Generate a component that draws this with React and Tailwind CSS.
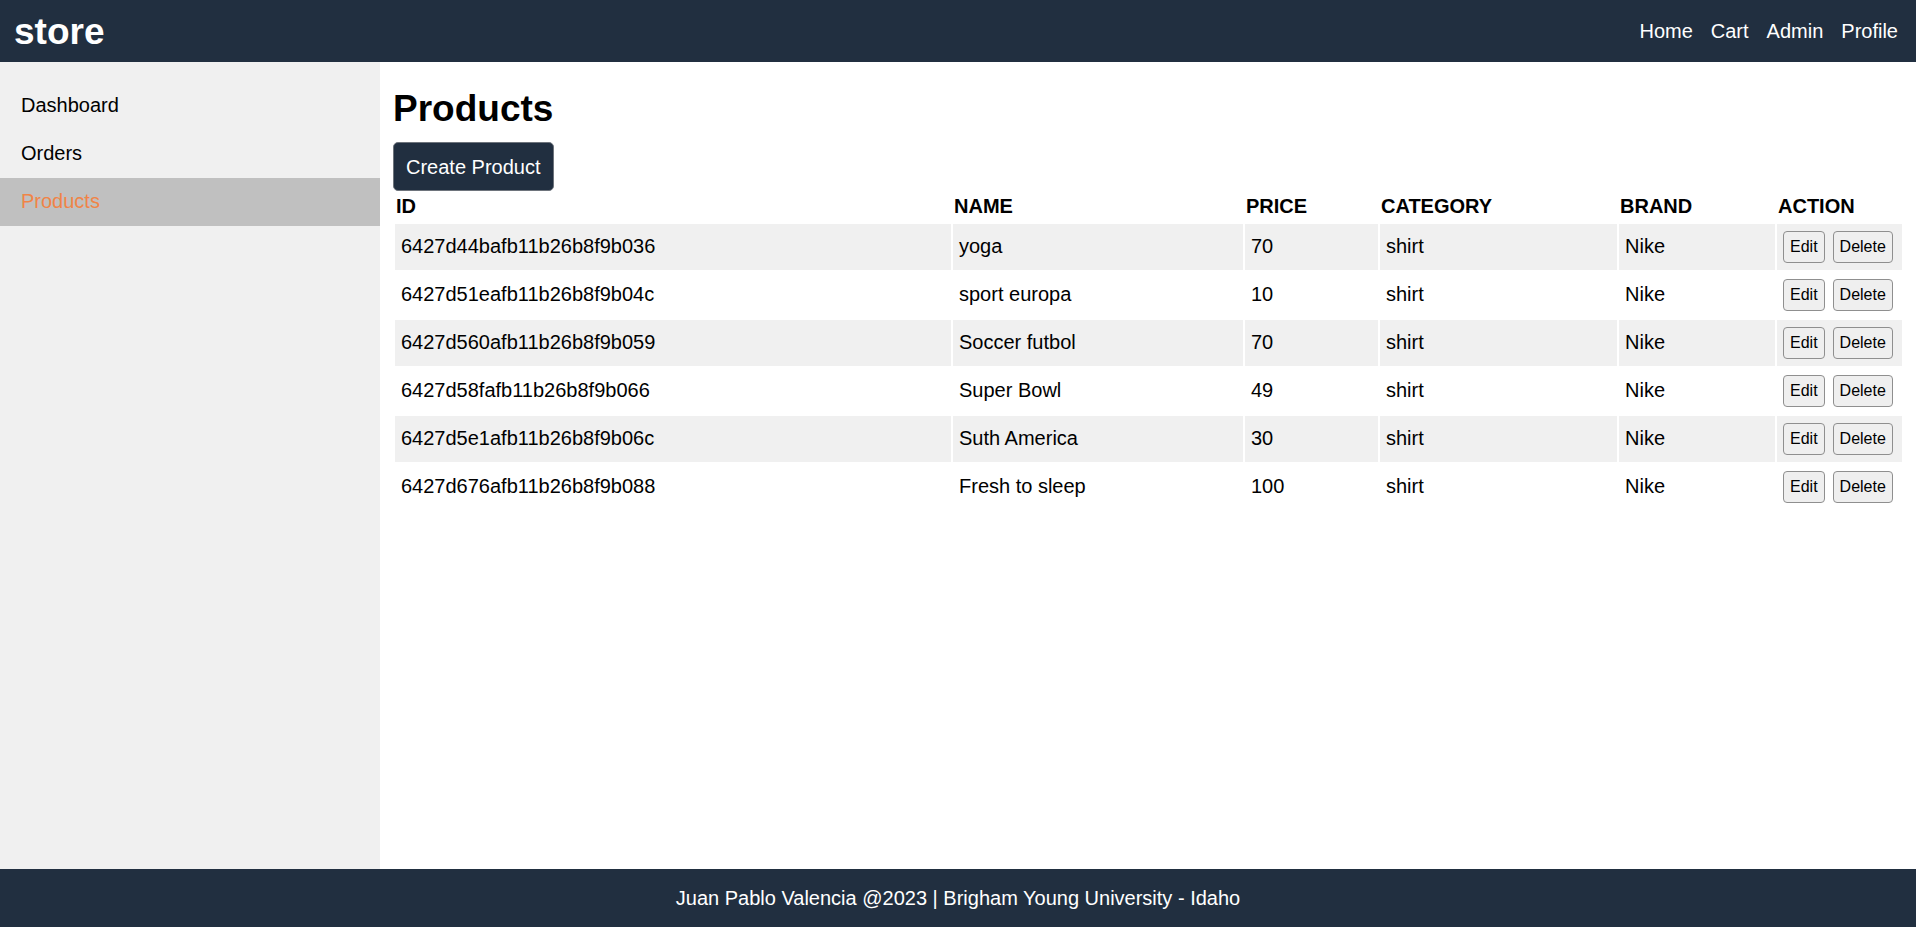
const products = [
  { id: '6427d44bafb11b26b8f9b036', name: 'yoga', price: 70, category: 'shirt', brand: 'Nike' },
  { id: '6427d51eafb11b26b8f9b04c', name: 'sport europa', price: 10, category: 'shirt', brand: 'Nike' },
  { id: '6427d560afb11b26b8f9b059', name: 'Soccer futbol', price: 70, category: 'shirt', brand: 'Nike' },
  { id: '6427d58fafb11b26b8f9b066', name: 'Super Bowl', price: 49, category: 'shirt', brand: 'Nike' },
  { id: '6427d5e1afb11b26b8f9b06c', name: 'Suth America', price: 30, category: 'shirt', brand: 'Nike' },
  { id: '6427d676afb11b26b8f9b088', name: 'Fresh to sleep', price: 100, category: 'shirt', brand: 'Nike' },
]

const sideLinks = ['Dashboard', 'Orders', 'Products']

function Header() {
  return (
    <header className="h-[62px] bg-[#212f40] text-white flex items-center justify-between pl-[14px] pr-[18px]">
      <span className="text-[37px] font-bold leading-none">store</span>
      <nav className="flex items-center gap-[18px] text-[20px]">
        <a href="#">Home</a>
        <a href="#">Cart</a>
        <a href="#">Admin</a>
        <a href="#">Profile</a>
      </nav>
    </header>
  )
}

function Sidebar() {
  return (
    <aside className="w-[380px] shrink-0 bg-[#f0f0f0] pt-[20px]">
      {sideLinks.map((l) => (
        <a
          key={l}
          href="#"
          className={
            l === 'Products'
              ? 'flex items-center h-[48px] pl-[21px] pb-[2px] text-[20px] bg-[#c0c0c0] text-[#f08447]'
              : 'flex items-center h-[48px] pl-[21px] pb-[2px] text-[20px] text-black'
          }
        >
          {l}
        </a>
      ))}
    </aside>
  )
}

function ProductTable() {
  const th = 'text-left font-bold text-[20px] leading-[23px] px-[1px] pt-[2px] pb-[4px]'
  return (
    <table className="w-full table-fixed border-separate border-spacing-[2px]">
      <thead>
        <tr>
          <th className={th + ' w-[556px]'}>ID</th>
          <th className={th + ' w-[290px]'}>NAME</th>
          <th className={th + ' w-[133px]'}>PRICE</th>
          <th className={th + ' w-[237px]'}>CATEGORY</th>
          <th className={th + ' w-[156px]'}>BRAND</th>
          <th className={th + ' w-[125px]'}>ACTION</th>
        </tr>
      </thead>
      <tbody>
        {products.map((p, i) => {
          const td = 'h-[46px] px-[6px] pt-0 pb-[2px] text-[20px] leading-[23px] ' + (i % 2 === 0 ? 'bg-[#f0f0f0]' : 'bg-white')
          return (
            <tr key={p.id}>
              <td className={td}>{p.id}</td>
              <td className={td}>{p.name}</td>
              <td className={td}>{p.price}</td>
              <td className={td}>{p.category}</td>
              <td className={td}>{p.brand}</td>
              <td className={'h-[46px] px-[6px] py-0 ' + (i % 2 === 0 ? 'bg-[#f0f0f0]' : 'bg-white')}>
                <div className="flex gap-[8px]">
                  <button className="h-[32px] px-[6px] text-[16px] border border-[#8f8f8f] rounded-[4px] bg-[#efefef]">Edit</button>
                  <button className="h-[32px] px-[6px] text-[16px] border border-[#8f8f8f] rounded-[4px] bg-[#efefef]">Delete</button>
                </div>
              </td>
            </tr>
          )
        })}
      </tbody>
    </table>
  )
}

export default function App() {
  return (
    <div className="min-h-screen flex flex-col text-black" style={{ fontFamily: '"Liberation Sans", Arial, sans-serif' }}>
      <Header />
      <div className="flex flex-1">
        <Sidebar />
        <main className="flex-1 pl-[13px] pr-[12px] pt-[26px]">
          <h1 className="text-[37px] font-bold leading-[42px] mb-[12px]">Products</h1>
          <button className="h-[49px] px-[12px] text-[20px] text-white bg-[#212f40] border border-[#6e747c] rounded-[5px]">
            Create Product
          </button>
          <ProductTable />
        </main>
      </div>
      <footer className="h-[58px] bg-[#212f40] text-white text-[20px] flex items-center justify-center">
        Juan Pablo Valencia @2023 | Brigham Young University - Idaho
      </footer>
    </div>
  )
}
